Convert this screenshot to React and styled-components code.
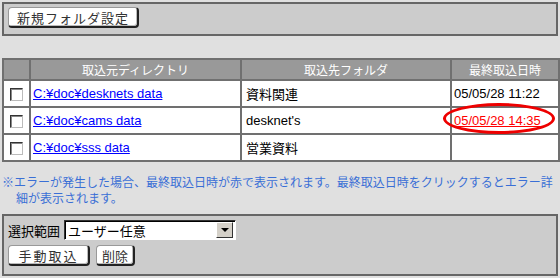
import React from "react";
import styled, { createGlobalStyle } from "styled-components";

const Global = createGlobalStyle`
  html, body { margin: 0; padding: 0; background: #e0e0e0; }
  body { font-family: "Liberation Sans", "Noto Sans CJK JP", sans-serif; color: #000; }
`;

const Page = styled.div`
  width: 556px;
  padding: 2px;
  display: flex;
  flex-direction: column;
`;

const Panel = styled.div`
  background: #cccccc;
  border: 2px solid #666666;
  padding: ${(p) => p.$pad || "3px 4px 6px"};
  display: flex;
  flex-direction: column;
  gap: ${(p) => p.$gap || "0"};
`;

const Button = styled.button`
  font-family: "Noto Sans CJK JP", sans-serif;
  font-size: 13px;
  letter-spacing: ${(p) => p.$spacing || "1px"};
  color: #333;
  background: #fff;
  height: 21px;
  width: ${(p) => p.$w};
  padding: 0;
  border-top: 1px solid #999;
  border-left: 1px solid #999;
  border-right: 2px solid #222;
  border-bottom: 2px solid #222;
  border-radius: 4px;
  box-shadow: inset -1px -1px 0 #bbb;
  display: inline-flex;
  align-items: center;
  justify-content: center;
  line-height: 1;
`;

const Table = styled.table`
  margin-top: 22px;
  width: 556px;
  border-collapse: collapse;
  border: 2px solid #707070;
  background: #fff;
  table-layout: fixed;
  font-size: 13px;
`;

const Th = styled.th`
  background: #999999;
  color: #fff;
  font-weight: normal;
  font-family: "Noto Sans CJK JP", sans-serif;
  font-size: 12px;
  height: 19px;
  padding: 0;
  border: 2px solid #707070;
  text-align: center;
`;

const Td = styled.td`
  border: 2px solid #707070;
  height: 25px;
  padding: 0 0 0 ${(p) => p.$pl || "2px"};
  text-align: ${(p) => p.$align || "left"};
  position: relative;
  white-space: nowrap;
`;

const Check = styled.span`
  display: inline-block;
  width: 11px;
  height: 11px;
  vertical-align: middle;
  background: #fff;
  border-top: 1px solid #333;
  border-left: 1px solid #333;
  border-right: 1px solid #bbb;
  border-bottom: 1px solid #bbb;
  box-shadow: inset 1px 1px 0 #888;
`;

const Link = styled.a`
  color: ${(p) => (p.$error ? "#ff0000" : "#0000ff")};
  text-decoration: underline;
  cursor: pointer;
`;

const Ellipse = styled.span`
  position: absolute;
  left: -9px;
  top: -5px;
  width: 106px;
  height: 25px;
  border: 3px solid #ee0000;
  border-radius: 50%;
  pointer-events: none;
`;

const Note = styled.p`
  margin: 12px 0 8px;
  padding-left: 14px;
  text-indent: -14px;
  font-family: "Noto Sans CJK JP", sans-serif;
  font-size: 12px;
  line-height: 16px;
  color: #3a6fd6;
`;

const Row = styled.div`
  display: flex;
  align-items: center;
  gap: ${(p) => p.$gap || "4px"};
`;

const Label = styled.span`
  font-family: "Noto Sans CJK JP", sans-serif;
  font-size: 13px;
  color: #000;
`;

const Select = styled.div`
  box-sizing: border-box;
  width: 172px;
  height: 20px;
  background: #fff;
  border-top: 1px solid #333;
  border-left: 1px solid #333;
  border-right: 1px solid #fff;
  border-bottom: 1px solid #fff;
  box-shadow: inset 1px 1px 0 #000;
  display: flex;
  align-items: center;
  justify-content: space-between;
  font-family: "Noto Sans CJK JP", sans-serif;
  font-size: 13px;
  padding-left: 3px;
`;

const Arrow = styled.span`
  width: 15px;
  height: 14px;
  margin-right: 2px;
  background: #d4d0c8;
  border-top: 1px solid #fff;
  border-left: 1px solid #fff;
  border-right: 1px solid #333;
  border-bottom: 1px solid #333;
  display: flex;
  align-items: center;
  justify-content: center;
`;

const Tri = styled.span`
  width: 0;
  height: 0;
  border-left: 4px solid transparent;
  border-right: 4px solid transparent;
  border-top: 4px solid #000;
`;

const rows = [
  { dir: "C:¥doc¥desknets data", folder: "資料関連", date: "05/05/28 11:22" },
  { dir: "C:¥doc¥cams data", folder: "desknet's", date: "05/05/28 14:35", error: true },
  { dir: "C:¥doc¥sss data", folder: "営業資料", date: "" },
];

export default function App() {
  return (
    <Page>
      <Global />
      <Panel>
        <Button $w="131px">新規フォルダ設定</Button>
      </Panel>
      <Table>
        <colgroup>
          <col style={{ width: "27px" }} />
          <col style={{ width: "211px" }} />
          <col style={{ width: "210px" }} />
          <col style={{ width: "108px" }} />
        </colgroup>
        <thead>
          <tr>
            <Th></Th>
            <Th>取込元ディレクトリ</Th>
            <Th>取込先フォルダ</Th>
            <Th>最終取込日時</Th>
          </tr>
        </thead>
        <tbody>
          {rows.map((r) => (
            <tr key={r.dir}>
              <Td $align="center" $pl="0">
                <Check />
              </Td>
              <Td>
                <Link>{r.dir}</Link>
              </Td>
              <Td $pl="4px">{r.folder}</Td>
              <Td $pl="2px">
                {r.error ? (
                  <>
                    <Link $error>{r.date}</Link>
                    <Ellipse />
                  </>
                ) : (
                  r.date
                )}
              </Td>
            </tr>
          ))}
        </tbody>
      </Table>
      <Note>
        ※エラーが発生した場合、最終取込日時が赤で表示されます。最終取込日時をクリックするとエラー詳細が表示されます。
      </Note>
      <Panel $pad="4px 4px 8px" $gap="5px">
        <Row>
          <Label>選択範囲</Label>
          <Select>
            ユーザー任意
            <Arrow>
              <Tri />
            </Arrow>
          </Select>
        </Row>
        <Row $gap="6px">
          <Button $w="82px" $spacing="2px">手動取込</Button>
          <Button $w="39px" $spacing="0">削除</Button>
        </Row>
      </Panel>
    </Page>
  );
}
